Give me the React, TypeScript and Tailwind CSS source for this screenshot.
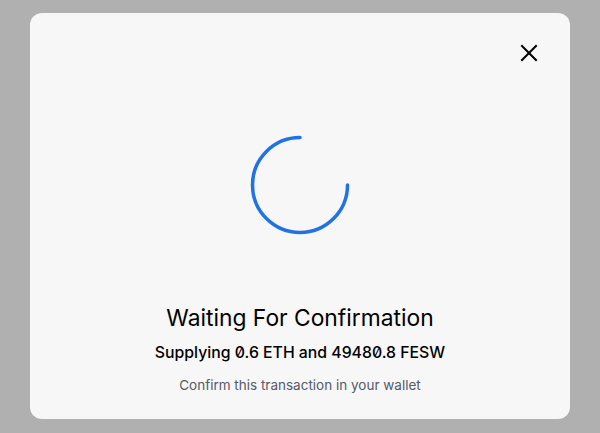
import React from "react";

export default function App() {
  return (
    <div className="w-[600px] h-[433px] bg-[#b0b0b0] flex items-start justify-center pt-[13px] font-['Inter',sans-serif]">
      <div className="w-[540px] h-[406px] bg-[#f7f7f7] rounded-[12px] flex flex-col items-center">
        <div className="w-full flex justify-end pt-[30px] pr-[31px]">
          <svg width="20" height="20" viewBox="0 0 20 20" fill="none" stroke="#000" strokeWidth="2" strokeLinecap="square">
            <line x1="3" y1="3" x2="17" y2="17" />
            <line x1="17" y1="3" x2="3" y2="17" />
          </svg>
        </div>
        <svg className="mt-[72px]" width="100" height="100" viewBox="0 0 100 100" fill="none">
          <path
            d="M50 2.5 A47.5 47.5 0 1 0 97.5 50"
            stroke="#2172e5"
            strokeWidth="3.5"
            strokeLinecap="round"
          />
        </svg>
        <div className="mt-[68px] text-[22.8px] leading-[30px] text-black">Waiting For Confirmation</div>
        <div className="mt-[10px] text-[15.8px] leading-[20px] font-medium text-black [font-feature-settings:'zero']">
          Supplying 0.6 ETH and 49480.8 FESW
        </div>
        <div className="mt-[13px] text-[13.5px] leading-[18px] text-[#565a69]">Confirm this transaction in your wallet</div>
      </div>
    </div>
  );
}
